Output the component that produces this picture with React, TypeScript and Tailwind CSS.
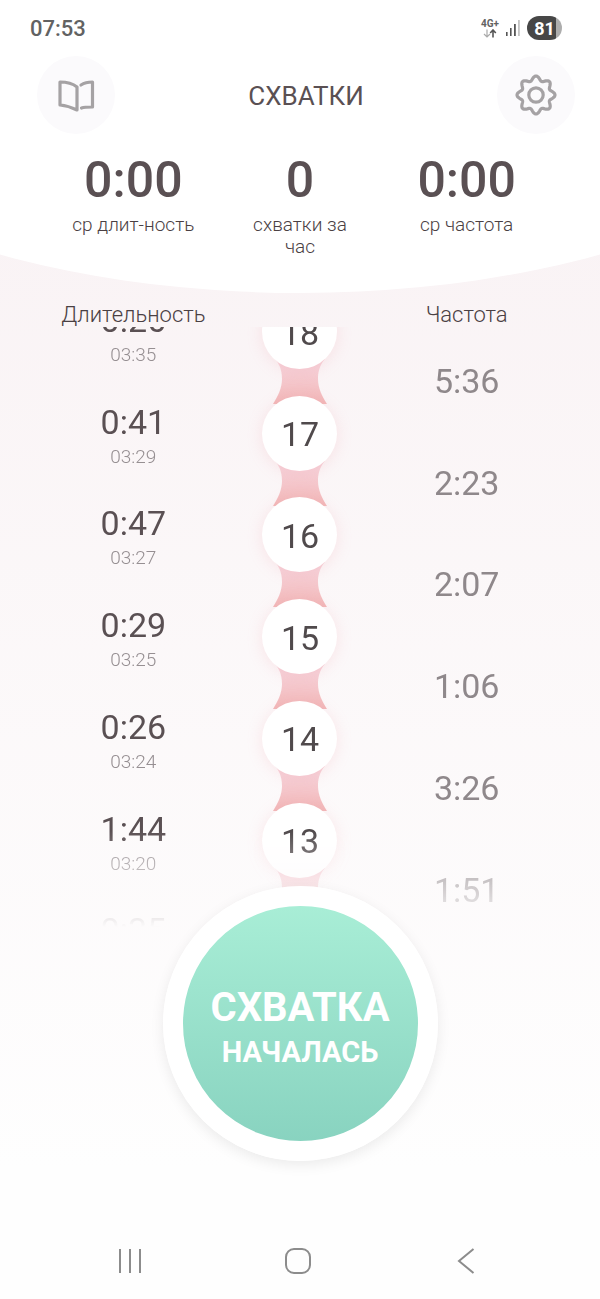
const stats = [
  { value: '0:00', label: 'ср длит-ность' },
  { value: '0', label: 'схватки за\nчас' },
  { value: '0:00', label: 'ср частота' },
];

const contractions = [
  { id: 18, duration: '0:26', startedAt: '03:35', frequency: '5:36' },
  { id: 17, duration: '0:41', startedAt: '03:29', frequency: '2:23' },
  { id: 16, duration: '0:47', startedAt: '03:27', frequency: '2:07' },
  { id: 15, duration: '0:29', startedAt: '03:25', frequency: '1:06' },
  { id: 14, duration: '0:26', startedAt: '03:24', frequency: '3:26' },
  { id: 13, duration: '1:44', startedAt: '03:20', frequency: '1:51' },
  { id: 12, duration: '0:35' },
];

// Eight soft lobes, the first one pointing up
const gearPoints = Array.from({ length: 144 }, (_, i) => {
  const angle = (i / 144) * Math.PI * 2;
  const radius = 16.8 + 2.2 * Math.cos(angle * 8);
  const x = 21 + radius * Math.sin(angle);
  const y = 21 - radius * Math.cos(angle);
  return `${x.toFixed(2)},${y.toFixed(2)}`;
}).join(' ');

function BookIcon() {
  return (
    <svg
      width="38"
      height="34"
      viewBox="0 0 38 34"
      fill="none"
      stroke="#a5a2a4"
      strokeWidth="3.2"
      strokeLinecap="round"
      strokeLinejoin="round"
      aria-hidden="true"
    >
      <path d="M3 4C9 4 15 5 20 9V32C15 29.500 9 27.500 3 27V4Z" />
      <path d="M24 7C27 5 31 4 35.500 4V29C31 29 27.500 29 24.500 30" />
    </svg>
  );
}

function GearIcon() {
  return (
    <svg
      width="42"
      height="42"
      viewBox="0 0 42 42"
      fill="none"
      stroke="#a5a2a4"
      strokeWidth="3.2"
      strokeLinejoin="round"
      aria-hidden="true"
    >
      <polygon points={gearPoints} />
      <circle cx="21" cy="21" r="7.200" />
    </svg>
  );
}

function Connector() {
  return (
    <svg
      width="54"
      height="46"
      viewBox="0 0 54 46"
      className="-mt-2.5 shrink-0"
      aria-hidden="true"
    >
      <defs>
        <linearGradient id="connector" x1="0" y1="0" x2="0" y2="1">
          <stop offset="0.2" stopColor="#f6d1d8" />
          <stop offset="0.95" stopColor="#f2b8b9" />
        </linearGradient>
      </defs>
      <path
        d="M2 0C8 7 9 14 9 20C9 29 5 37 0 45H54C49 37 45 29 45 20C45 14 46 7 52 0Z"
        fill="url(#connector)"
      />
    </svg>
  );
}

function StatusBar() {
  return (
    <div className="flex h-14 items-center justify-between pl-[30px] pr-[38px] text-[#626262]">
      <span className="text-[22px] font-medium">07:53</span>
      <div className="flex items-center gap-1.5">
        <div className="flex flex-col items-center">
          <span className="text-[10px] font-bold leading-[10px]">4G+</span>
          <svg width="16" height="9" viewBox="0 0 16 9" fill="none" aria-hidden="true">
            <path d="M5 0.500V8M2 5L5 8L8 5" stroke="#aaaaaa" strokeWidth="1.200" />
            <path d="M11 8.500V1M8.200 4L11 1L13.800 4" stroke="#555555" strokeWidth="1.600" />
          </svg>
        </div>
        <svg width="16" height="18" viewBox="0 0 16 18" aria-hidden="true">
          <rect x="1" y="13" width="1.600" height="4" fill="#555555" />
          <rect x="5" y="9" width="1.600" height="8" fill="#555555" />
          <rect x="9" y="5" width="1.800" height="12" fill="#555555" />
          <rect x="13" y="1" width="1.800" height="16" fill="#c4c4c4" />
        </svg>
        <div className="flex h-6 w-[35px] items-center justify-center rounded-full bg-linear-to-r from-[#474747] from-82% to-[#adadad] to-82% text-[18px] font-bold text-white">
          81
        </div>
      </div>
    </div>
  );
}

export default function App() {
  return (
    <div className="flex min-h-screen flex-col bg-linear-to-b from-[#f9f2f4] from-10% to-[#fefefe] to-90% font-[Roboto,sans-serif] text-[#5a5053]">
      <header className="bg-white pb-[35px] [clip-path:ellipse(101%_100%_at_50%_0)]">
        <StatusBar />
        <div className="flex items-center justify-between pl-[37px] pr-[25px]">
          <button
            type="button"
            aria-label="Справка"
            className="flex size-[78px] items-center justify-center rounded-full bg-[#fbfafc]"
          >
            <BookIcon />
          </button>
          <h1 className="pt-0.5 text-[26px]">СХВАТКИ</h1>
          <button
            type="button"
            aria-label="Настройки"
            className="flex size-[78px] items-center justify-center rounded-full bg-[#fbfafc]"
          >
            <GearIcon />
          </button>
        </div>
        <dl className="mt-[21px] grid grid-cols-3 px-[50px] text-center">
          {stats.map((stat) => (
            <div key={stat.label} className="flex flex-col-reverse justify-end gap-[9px]">
              <dt className="whitespace-pre text-[19px] font-light leading-[22px] text-[#4a4043]">
                {stat.label}
              </dt>
              <dd className="text-[50px] font-medium leading-[50px]">{stat.value}</dd>
            </div>
          ))}
        </dl>
      </header>

      <main className="flex flex-col items-center">
        <div className="grid w-full grid-cols-3 px-[50px] pt-2.5 text-center text-[22px] font-light leading-6 text-[#4a4043]">
          <h2>Длительность</h2>
          <h2 className="col-start-3">Частота</h2>
        </div>

        <div className="h-[600px] w-full overflow-hidden [mask-image:linear-gradient(to_bottom,black_84%,transparent)]">
          <div className="-mt-[33px] grid h-[712px] grid-cols-3 grid-rows-1 px-[50px] text-center">
            <ol className="grid grid-rows-7">
              {contractions.map((item) => (
                <li key={item.id} className="pt-1.5">
                  <p className="text-[34px] leading-10">{item.duration}</p>
                  <p className="mt-[3px] text-[19px] font-light leading-6 text-[#968f92]">
                    {item.startedAt}
                  </p>
                </li>
              ))}
            </ol>
            <ol className="grid grid-rows-7">
              {contractions.map((item) => (
                <li key={item.id} className="flex flex-col items-center">
                  <span className="relative z-10 flex size-[75px] shrink-0 items-center justify-center rounded-full bg-white pt-[3px] text-[34px] text-[#504a4c] shadow-[0_2px_16px_rgba(240,150,160,0.2)]">
                    {item.id}
                  </span>
                  <Connector />
                </li>
              ))}
            </ol>
            <ol className="grid grid-rows-7 text-[34px] leading-10 text-[#8f888b]">
              {contractions.map((item) => (
                <li key={item.id} className="pt-[67px]">
                  {item.frequency}
                </li>
              ))}
            </ol>
          </div>
        </div>

        <button
          type="button"
          className="z-20 -mt-[41px] flex size-[275px] flex-col items-center justify-center rounded-full border-[20px] border-white bg-linear-to-b from-[#abf0d8] to-[#86d1be] bg-origin-border pt-2 font-bold text-white shadow-[0_4px_14px_rgba(0,0,0,0.08)]"
        >
          <span className="text-[40px] leading-[48px]">СХВАТКА</span>
          <span className="text-[29px] leading-10">НАЧАЛАСЬ</span>
        </button>
      </main>

      <nav className="mt-auto grid h-[76px] grid-cols-3 pl-[46px] pr-[50px] text-[#8c8c8c]">
        <button type="button" aria-label="Недавние" className="flex items-center justify-center">
          <svg width="24" height="26" viewBox="0 0 24 26" stroke="currentColor" strokeWidth="2" aria-hidden="true">
            <path d="M2 1V25M12 1V25M22 1V25" />
          </svg>
        </button>
        <button type="button" aria-label="Домой" className="flex items-center justify-center">
          <svg width="26" height="26" viewBox="0 0 26 26" fill="none" stroke="currentColor" strokeWidth="2" aria-hidden="true">
            <rect x="1" y="1" width="24" height="24" rx="8" />
          </svg>
        </button>
        <button type="button" aria-label="Назад" className="flex items-center justify-center">
          <svg width="18" height="26" viewBox="0 0 18 26" fill="none" stroke="currentColor" strokeWidth="2" aria-hidden="true">
            <path d="M16.500 1L2 13L16.500 25" />
          </svg>
        </button>
      </nav>
    </div>
  );
}
